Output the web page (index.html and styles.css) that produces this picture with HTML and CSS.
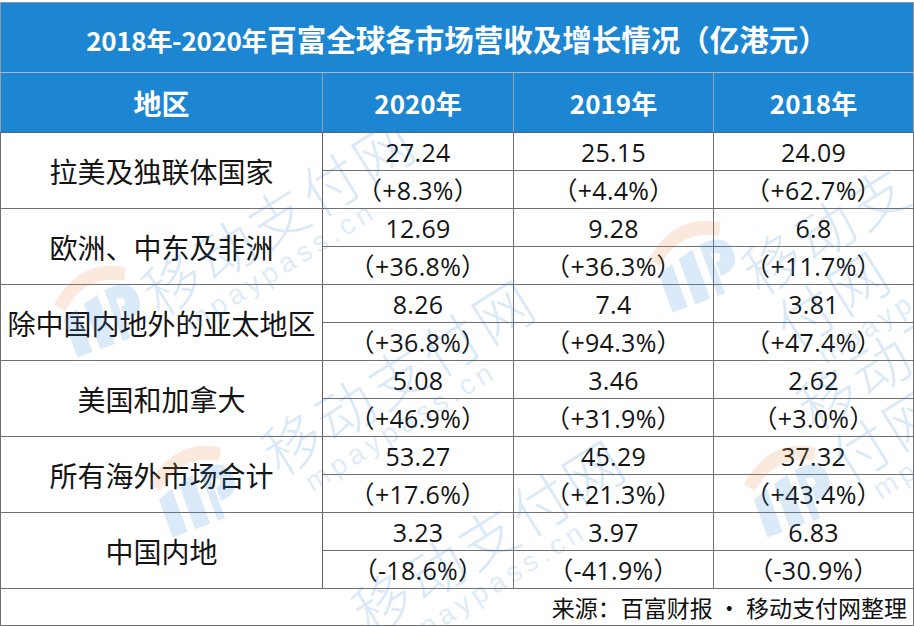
FILE: index.html
```html
<!DOCTYPE html>
<html lang="zh-CN">
<head>
<meta charset="utf-8">
<title>百富全球各市场营收及增长情况</title>
<link rel="stylesheet" href="styles.css">
</head>
<body>
<div class="page">
  <table class="report">
    <colgroup>
      <col class="c1"><col class="c2"><col class="c3"><col class="c4">
    </colgroup>
    <thead>
      <tr class="title-row"><th colspan="4"><span class="yr">2018年-2020年</span>百富全球各市场营收及增长情况（亿港元）</th></tr>
      <tr class="head-row"><th>地区</th><th>2020年</th><th>2019年</th><th>2018年</th></tr>
    </thead>
    <tbody>
      <tr><td rowspan="2" class="region">拉美及独联体国家</td><td>27.24</td><td>25.15</td><td>24.09</td></tr>
      <tr><td>（+8.3%）</td><td>（+4.4%）</td><td>（+62.7%）</td></tr>
      <tr><td rowspan="2" class="region">欧洲、中东及非洲</td><td>12.69</td><td>9.28</td><td>6.8</td></tr>
      <tr><td>（+36.8%）</td><td>（+36.3%）</td><td>（+11.7%）</td></tr>
      <tr><td rowspan="2" class="region wide">除中国内地外的亚太地区</td><td>8.26</td><td>7.4</td><td>3.81</td></tr>
      <tr><td>（+36.8%）</td><td>（+94.3%）</td><td>（+47.4%）</td></tr>
      <tr><td rowspan="2" class="region">美国和加拿大</td><td>5.08</td><td>3.46</td><td>2.62</td></tr>
      <tr><td>（+46.9%）</td><td>（+31.9%）</td><td>（+3.0%）</td></tr>
      <tr><td rowspan="2" class="region">所有海外市场合计</td><td>53.27</td><td>45.29</td><td>37.32</td></tr>
      <tr><td>（+17.6%）</td><td>（+21.3%）</td><td>（+43.4%）</td></tr>
      <tr><td rowspan="2" class="region">中国内地</td><td>3.23</td><td>3.97</td><td>6.83</td></tr>
      <tr><td>（-18.6%）</td><td>（-41.9%）</td><td>（-30.9%）</td></tr>
    </tbody>
    <tfoot>
      <tr class="foot-row"><td colspan="4">来源：百富财报 · 移动支付网整理</td></tr>
    </tfoot>
  </table>

  <div class="watermarks" aria-hidden="true">
    <div class="wm wm-a"><span class="wm-cn">移动支付网</span><span class="wm-en">mpaypass.cn</span></div>
    <div class="wm wm-b"><span class="wm-cn">移动支付网</span><span class="wm-en">mpaypass.cn</span></div>
    <div class="wm wm-c"><span class="wm-cn">移动支付网</span><span class="wm-en">mpaypass.cn</span></div>
    <div class="wm wm-d"><span class="wm-cn">移动支付网</span><span class="wm-en">mpaypass.cn</span></div>
    <div class="wm wm-e"><span class="wm-cn">移动支付网</span><span class="wm-en">mpaypass.cn</span></div>
    <svg class="logo logo-a" viewBox="0 0 100 100"><path d="M10 40 Q50 5 90 30 L84 42 Q50 22 18 50 Z" fill="#f08a4b"/><path d="M14 58 L30 52 L30 98 L14 98 Z M38 50 L54 46 L54 98 L38 98 Z M62 44 Q92 40 92 62 Q92 80 72 80 L72 66 Q78 66 78 60 Q78 56 70 56 L70 98 L62 98 Z" fill="#3f8fdc"/></svg>
    <svg class="logo logo-b" viewBox="0 0 100 100"><path d="M10 40 Q50 5 90 30 L84 42 Q50 22 18 50 Z" fill="#f08a4b"/><path d="M14 58 L30 52 L30 98 L14 98 Z M38 50 L54 46 L54 98 L38 98 Z M62 44 Q92 40 92 62 Q92 80 72 80 L72 66 Q78 66 78 60 Q78 56 70 56 L70 98 L62 98 Z" fill="#3f8fdc"/></svg>
    <svg class="logo logo-c" viewBox="0 0 100 100"><path d="M10 40 Q50 5 90 30 L84 42 Q50 22 18 50 Z" fill="#f08a4b"/><path d="M14 58 L30 52 L30 98 L14 98 Z M38 50 L54 46 L54 98 L38 98 Z M62 44 Q92 40 92 62 Q92 80 72 80 L72 66 Q78 66 78 60 Q78 56 70 56 L70 98 L62 98 Z" fill="#3f8fdc"/></svg>
    <svg class="logo logo-d" viewBox="0 0 100 100"><path d="M10 40 Q50 5 90 30 L84 42 Q50 22 18 50 Z" fill="#f08a4b"/><path d="M14 58 L30 52 L30 98 L14 98 Z M38 50 L54 46 L54 98 L38 98 Z M62 44 Q92 40 92 62 Q92 80 72 80 L72 66 Q78 66 78 60 Q78 56 70 56 L70 98 L62 98 Z" fill="#3f8fdc"/></svg>
  </div>
</div>
</body>
</html>
```
FILE: styles.css
```css
html, body {
  margin: 0;
  padding: 0;
  background: #ffffff;
}

.page {
  position: relative;
  width: 914px;
  height: 626px;
  overflow: hidden;
  padding-top: 2px;
  box-sizing: border-box;
}

.report {
  width: 913px;
  border-collapse: collapse;
  table-layout: fixed;
  font-family: "Open Sans", "Noto Sans CJK SC", sans-serif;
  color: #141414;
}

.c1 { width: 322px; }
.c2 { width: 191px; }
.c3 { width: 200px; }
.c4 { width: 200px; }

.report th,
.report td {
  border: 1px solid #707070;
  padding: 0;
  text-align: center;
  vertical-align: middle;
  white-space: nowrap;
}

.title-row th {
  height: 69px;
  background: #1d86d2;
  color: #ffffff;
  font-family: "Noto Sans CJK SC", sans-serif;
  font-weight: 700;
  font-size: 29.5px;
  border-color: #8a9aa8;
  border-bottom-color: #a9b8c2;
}

.title-row .yr {
  font-size: 26px;
  letter-spacing: -0.3px;
}

.head-row th {
  height: 59px;
  background: #1d86d2;
  color: #ffffff;
  font-family: "Noto Sans CJK SC", sans-serif;
  font-weight: 700;
  font-size: 26px;
  border-color: #8fa0ae;
  border-bottom-color: #4a6a86;
}

.head-row th:first-child {
  font-size: 28px;
}

.report tbody td {
  height: 37px;
  font-size: 25px;
  line-height: 30px;
  letter-spacing: 0.3px;
}

.report tbody td.region {
  font-family: "Noto Sans CJK SC", sans-serif;
  font-size: 28px;
  font-weight: 400;
  letter-spacing: 0;
  border-right-color: #6e5a5e;
}

.report tbody td.region.wide {
  letter-spacing: 0;
}

.foot-row td {
  height: 36px;
  text-align: right;
  padding-right: 6px;
  font-family: "Noto Sans CJK SC", sans-serif;
  font-size: 23px;
  line-height: 30px;
  color: #111111;
}

/* watermark layer over the table */
.watermarks {
  position: absolute;
  inset: 0;
  pointer-events: none;
}

.wm {
  position: absolute;
  display: flex;
  flex-direction: column;
  align-items: flex-start;
  transform: rotate(-32deg);
  transform-origin: left top;
  opacity: 0.17;
}

.wm-cn {
  font-family: "Noto Sans CJK SC", sans-serif;
  font-weight: 300;
  font-size: 58px;
  line-height: 62px;
  color: #2d7fd6;
  letter-spacing: 4px;
}

.wm-en {
  font-family: "Liberation Sans", sans-serif;
  font-size: 28px;
  line-height: 30px;
  color: #4b8fd8;
  letter-spacing: 5px;
  margin-left: 20px;
}

.wm-a { left: 130px; top: 270px; }
.wm-b { left: 730px; top: 250px; }
.wm-c { left: 250px; top: 430px; }
.wm-d { left: 785px; top: 385px; }
.wm-e { left: 340px; top: 590px; }

.logo {
  position: absolute;
  width: 100px;
  height: 100px;
  opacity: 0.18;
  transform: rotate(-20deg);
}

.logo-a { left: 45px; top: 250px; }
.logo-b { left: 640px; top: 205px; }
.logo-c { left: 140px; top: 430px; }
.logo-d { left: 735px; top: 430px; }
```
